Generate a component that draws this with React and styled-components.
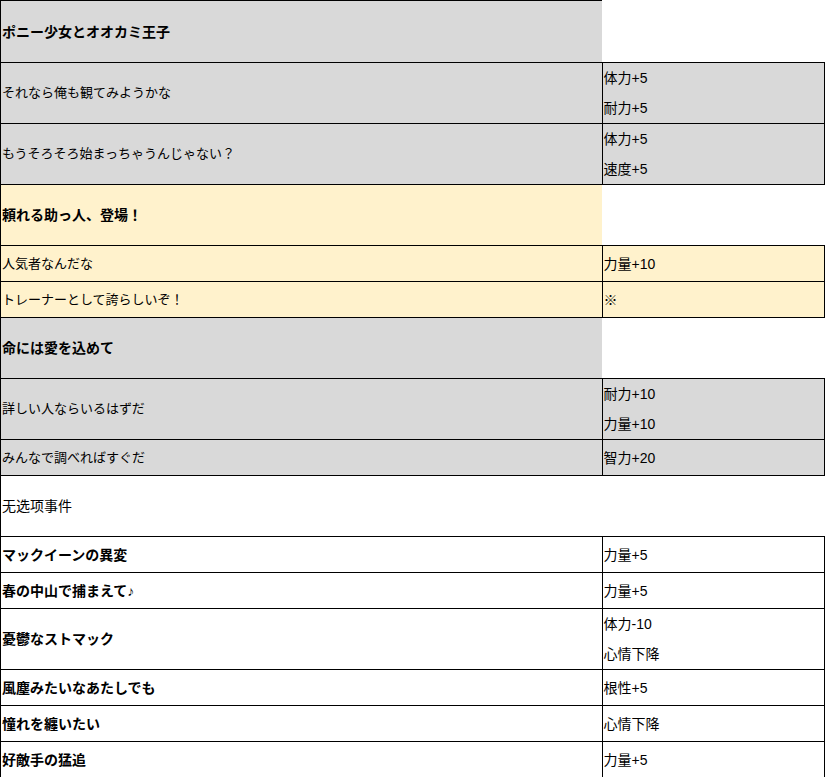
import React from 'react';
import styled, { createGlobalStyle } from 'styled-components';

const GlobalStyle = createGlobalStyle`
  html, body {
    margin: 0;
    padding: 0;
    background: #ffffff;
  }
  body {
    font-family: "Liberation Sans", "Noto Sans CJK JP", sans-serif;
    color: #000000;
  }
`;

const tones = {
    gray: '#d9d9d9',
    yellow: '#fff2cc',
    white: '#ffffff',
};

// each block: a title row and its choices
const events = [
    {
        title: 'ポニー少女とオオカミ王子',
        tone: 'gray',
        options: [
            { text: 'それなら俺も観てみようかな', effects: ['体力+5', '耐力+5'] },
            { text: 'もうそろそろ始まっちゃうんじゃない？', effects: ['体力+5', '速度+5'] },
        ],
    },
    {
        title: '頼れる助っ人、登場！',
        tone: 'yellow',
        options: [
            { text: '人気者なんだな', effects: ['力量+10'] },
            { text: 'トレーナーとして誇らしいぞ！', effects: ['※'] },
        ],
    },
    {
        title: '命には愛を込めて',
        tone: 'gray',
        options: [
            { text: '詳しい人ならいるはずだ', effects: ['耐力+10', '力量+10'] },
            { text: 'みんなで調べればすぐだ', effects: ['智力+20'] },
        ],
    },
];

const plainEvents = [
    { text: 'マックイーンの異変', effects: ['力量+5'] },
    { text: '春の中山で捕まえて♪', effects: ['力量+5'] },
    { text: '憂鬱なストマック', effects: ['体力-10', '心情下降'] },
    { text: '風塵みたいなあたしでも', effects: ['根性+5'] },
    { text: '憧れを纏いたい', effects: ['心情下降'] },
    { text: '好敵手の猛追', effects: ['力量+5'] },
];

const Sheet = styled.table`
  border-collapse: collapse;
  table-layout: fixed;
  width: 825px;
`;

const NameCell = styled.td`
  width: 600px;
  height: ${(props) => props.$height}px;
  padding: 0 0 0 1px;
  background: ${(props) => tones[props.$tone]};
  border: 1px solid #000000;
  border-right: ${(props) => (props.$open ? 'none' : '1px solid #000000')};
  font-size: ${(props) => (props.$bold || props.$large ? '14px' : '13px')};
  font-weight: ${(props) => (props.$bold ? 700 : 400)};
  line-height: 18px;
  vertical-align: middle;
  white-space: nowrap;
`;

const EffectCell = styled.td`
  padding: 0 0 0 1px;
  background: ${(props) => (props.$open ? '#ffffff' : tones[props.$tone])};
  border: ${(props) => (props.$open ? 'none' : '1px solid #000000')};
  font-size: 14px;
  vertical-align: middle;
  white-space: nowrap;
`;

const EffectLine = styled.div`
  height: 30px;
  line-height: 30px;
`;

const Row = ({ text, tone, bold, large, open, height, effects }) => (
    <tr>
        <NameCell
            $tone={tone}
            $bold={bold}
            $large={large}
            $open={open}
            $height={height}>
            {text}
        </NameCell>
        <EffectCell $tone={tone} $open={open}>
            {effects &&
                effects.map((effect, index) => (
                    <EffectLine key={index}>{effect}</EffectLine>
                ))}
        </EffectCell>
    </tr>
);

const App = () => {
    return (
        <>
            <GlobalStyle />
            <Sheet>
                <tbody>
                    {events.map((event, index) => (
                        <React.Fragment key={index}>
                            <Row
                                text={event.title}
                                tone={event.tone}
                                bold
                                open
                                height={index === 0 ? 61 : 60}
                            />
                            {event.options.map((option, i) => (
                                <Row
                                    key={i}
                                    text={option.text}
                                    tone={event.tone}
                                    effects={option.effects}
                                    height={option.effects.length > 1 ? 60 : 35}
                                />
                            ))}
                        </React.Fragment>
                    ))}
                    <Row text="无选项事件" tone="white" large open height={60} />
                    {plainEvents.map((item, index) => (
                        <Row
                            key={index}
                            text={item.text}
                            tone="white"
                            bold
                            effects={item.effects}
                            height={item.effects.length > 1 ? 60 : 35}
                        />
                    ))}
                </tbody>
            </Sheet>
        </>
    );
};

export default App;
